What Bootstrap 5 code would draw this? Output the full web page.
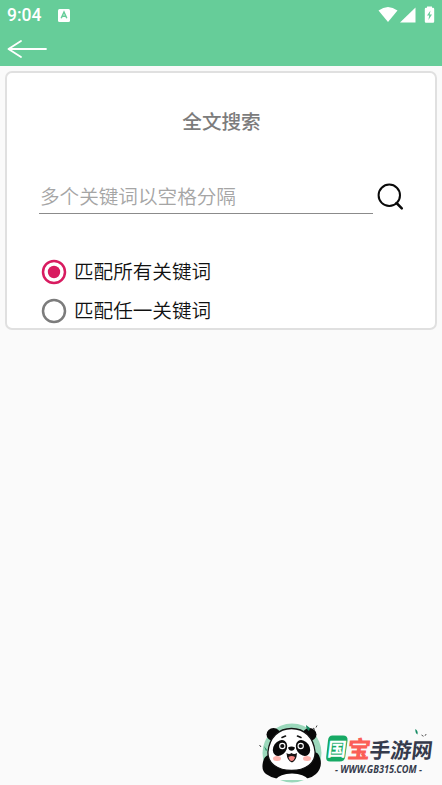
<!DOCTYPE html>
<html lang="zh-CN">
<head>
<meta charset="utf-8">
<meta name="viewport" content="width=device-width, initial-scale=1">
<title>全文搜索</title>
<link href="https://cdn.jsdelivr.net/npm/bootstrap@5.3.0/dist/css/bootstrap.min.css" rel="stylesheet">
<style>
body{background:#fafafa;font-family:Roboto,"Noto Sans CJK SC",sans-serif;font-size:19.6px;line-height:28px;color:#111}
svg{display:block;flex:none}
.app-top{background:#66cd99;height:66px;color:#fff}
.status{height:30px;padding-left:7px;padding-right:6px}
.clock{font-size:17.5px;font-weight:500;line-height:30px;width:51px}
.search-card{margin:5px 5px 0;height:259px;border:2px solid #e0e0e0;border-radius:7px;padding:0 31px 0 32px}
.heading{font-size:19.6px;line-height:28px;font-weight:500;color:#7c7c7c;margin:36px 0 0}
.search-row{margin-top:42px;height:37px}
.field{width:334px;height:35px;border:0;border-bottom:1.5px solid #8b8b8b;border-radius:0;padding:2px 0 0 1px;font-size:19.6px;line-height:28px;background:transparent}
.field::placeholder{color:#a5a5a5;opacity:1;font-weight:350}
.options{margin-top:36px;padding-left:2px}
.option{height:39px;line-height:39px;font-weight:350;gap:7px}
.option span{padding-top:1px}
.brand-row{height:64px;padding-right:2px}
.site-text{font-family:"Noto Sans CJK SC",sans-serif;font-weight:700}
</style>
</head>
<body class="d-flex flex-column vh-100 overflow-hidden">
<header class="app-top flex-shrink-0">
  <div class="status d-flex align-items-center">
    <span class="clock">9:04</span>
    <svg width="12" height="13" viewBox="0 0 12 13"><rect width="12" height="13" rx="1.5" fill="#fff"/><path d="M3.2 9.2 6 3l2.8 6.2M4.3 7.3h3.4" fill="none" stroke="#66cd99" stroke-width="1.5"/></svg>
    <svg class="ms-auto" width="58" height="18" viewBox="378 5 58 18"><g fill="#fff"><path d="M378.5 9.500Q388 2.500 397.5 9.500L388 21Z"/><path d="M415.5 6.500v15H400Z"/><path d="M427 6.700V5.500h5v1.200h1q1.200 0 1.200 1.200V20.500q0 1.200-1.200 1.200h-7q-1.200 0-1.200-1.200V7.900q0-1.200 1.200-1.200Z"/></g><path d="m430.500 9.500-3.500 5h2.200l-.8 4.500 3.600-5.500h-2.300Z" fill="#66cd99"/></svg>
  </div>
  <svg width="52" height="36" viewBox="0 30 52 36" role="img" aria-label="返回"><path d="M46 49H9M21 41 8.500 49 21 57" fill="none" stroke="#fff" stroke-width="1.8" stroke-linecap="round" stroke-linejoin="round"/></svg>
</header>
<main>
  <section class="search-card card d-block bg-white">
    <h1 class="heading text-center">全文搜索</h1>
    <div class="search-row d-flex">
      <input class="field form-control flex-shrink-0 shadow-none" placeholder="多个关键词以空格分隔" aria-label="关键词">
      <svg width="32" height="34" viewBox="373 179 32 34"><circle cx="389.300" cy="195.300" r="10.700" fill="none" stroke="#090909" stroke-width="2"/><path d="m396.500 203 5.300 5.300" stroke="#090909" stroke-width="2.500" stroke-linecap="round"/></svg>
    </div>
    <div class="options">
      <div class="option d-flex align-items-center" role="radio" aria-checked="true"><svg width="26" height="26"><circle cx="13" cy="13" r="11" fill="none" stroke="#d81b60" stroke-width="2.500"/><circle cx="13" cy="13" r="6.200" fill="#d81b60"/></svg><span>匹配所有关键词</span></div>
      <div class="option d-flex align-items-center" role="radio" aria-checked="false"><svg width="26" height="26"><circle cx="13" cy="13" r="11" fill="none" stroke="#7c7c7c" stroke-width="2.500"/></svg><span>匹配任一关键词</span></div>
    </div>
  </section>
</main>
<footer class="brand-row mt-auto d-flex justify-content-end flex-shrink-0">
  <svg width="182" height="64" viewBox="258 721 182 64" role="img" aria-label="国宝手游网">
    <circle cx="292" cy="753" r="29.500" fill="#9bd8bb"/>
    <path d="M263 762q-2 8 3 12 8 6 26 6t24-6q7-7 4-16-1.500-6-6-6-5 0-6 8l-1 4H277l-2-5q-2-4-6-4-5 1-6 7Z" fill="#080808"/>
    <path d="M275 780q5-6.500 17-6.500t17 6.500Z" fill="#fff"/>
    <ellipse cx="273.500" cy="734.500" rx="7" ry="6.500" fill="#080808"/><ellipse cx="309.500" cy="734.500" rx="7" ry="6.500" fill="#080808"/>
    <path d="M291.500 728.500c-13 0-22 9-23.500 23-1 12 10 19 23.500 19s24.500-7 23.500-19c-1.500-14-10.500-23-23.500-23Z" fill="#fff" stroke="#111" stroke-width="1.300"/>
    <ellipse cx="280" cy="748" rx="6.500" ry="8.500" transform="rotate(35 280 748)" fill="#090909"/><ellipse cx="303" cy="748" rx="6.500" ry="8.500" transform="rotate(-35 303 748)" fill="#090909"/>
    <circle cx="282.300" cy="746" r="3.200" fill="#fff"/><circle cx="300.700" cy="746" r="3.200" fill="#fff"/><circle cx="282.300" cy="746" r="2.100" fill="#111"/><circle cx="300.700" cy="746" r="2.100" fill="#111"/>
    <ellipse cx="277" cy="758.500" rx="4" ry="2.500" fill="#ffb4ad"/><ellipse cx="307" cy="758.500" rx="4" ry="2.500" fill="#ffb4ad"/>
    <path d="M288 747.500q3.500-2 7 0-1 3.200-3.500 3.200t-3.500-3.200Z" fill="#080808"/>
    <path d="M286.500 753q2.500 2 5 0 2.500 2 5.500 0-.5 8-5 9.500-5-1.500-5.500-9.500Z" fill="#171313"/><path d="M288.500 757q3-2 6.500 0-1 4-3.300 4t-3.200-4Z" fill="#f48480"/>
    <path d="m282 737.500 3.500-1.500m12 0 3.500 1.500" stroke="#111" stroke-width="1.600" stroke-linecap="round"/>
    <path d="m306 725 4 3-1 3q-3-2-3-6ZM264 746l3 4-1 1Z" fill="#15845c"/><path d="m313 728 2 1.500m1-2 1-2M259.500 745l1.500 2" stroke="#444" fill="none"/>
    <path d="M332.500 735.500h10.500q5 0 4.500 5l-2.300 16.500q-.8 4.500-5.500 4.500h-9.500q-4.500 0-4-4.500l1.800-16.500q.5-5 4.500-5Z" fill="#16a964"/>
    <g class="site-text" transform="translate(328 756) skewX(-7)"><text x="-1.200" y="-.4" font-size="19" fill="#fff">国</text><text x="18.500" y="1.500" font-size="23.500" font-weight="900" fill="#fb5f57">宝</text><text x="41" y="2" font-size="21" fill="#353b4c">手游网</text></g>
    <path d="M415.300 729q3 1.500 2.200 5.500-2.300-1-2.200-5.500Z" fill="#168c64"/><path d="m421.500 735 2 1.300m1.500-.5 1.200-1.800" stroke="#555" fill="none"/>
    <text x="335" y="772.500" font-family="'Noto Sans', sans-serif" font-size="10" font-weight="700" font-style="italic" textLength="87" lengthAdjust="spacingAndGlyphs" fill="#353b4c">- WWW.GB315.COM -</text>
  </svg>
</footer>
<script src="https://cdn.jsdelivr.net/npm/bootstrap@5.3.0/dist/js/bootstrap.bundle.min.js"></script>
</body>
</html>
